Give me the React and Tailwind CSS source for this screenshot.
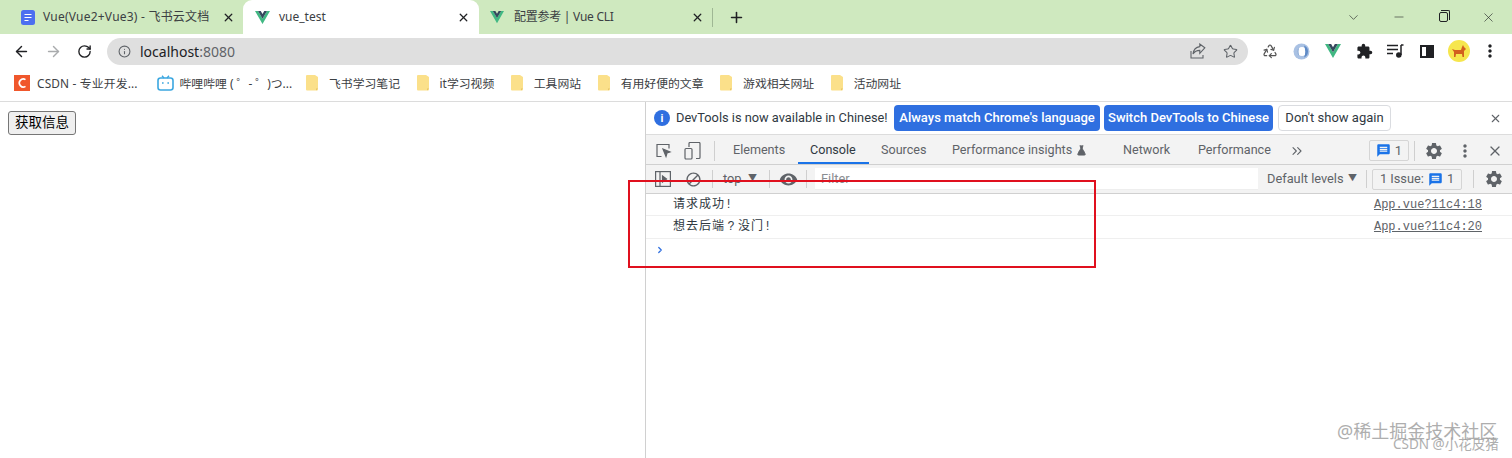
import React from "react";
import { ArrowLeft, ArrowRight, RotateCw, Info, Star, Recycle, X, Plus, ChevronDown, Minus, ChevronsRight, ChevronRight, FlaskConical } from "lucide-react";
import { MdSettings, MdVisibility, MdMessage, MdMoreVert, MdBlock, MdExtension } from "react-icons/md";

const VueLogo = ({ s = 16 }) => (
  <svg width={s} height={s} viewBox="0 0 24 21" className="shrink-0">
    <path d="M0 0h4.8L12 12.4 19.2 0H24L12 21z" fill="#41b883" />
    <path d="M4.8 0h4.4L12 5l2.8-5h4.4L12 12.4z" fill="#35495e" />
  </svg>
);
const Folder = () => (
  <svg width="13" height="16" viewBox="0 0 13 16" className="shrink-0">
    <path d="M1 0h8l3 2v12.500a1 1 0 0 1-1 1H1a1 1 0 0 1-1-1V1a1 1 0 0 1 1-1z" fill="#fbe08a" />
    <path d="M10 15.500l2-2h-2z" fill="#e4c266" />
  </svg>
);
const DocIcon = () => (
  <svg width="14" height="15" viewBox="0 0 14 15" className="shrink-0">
    <rect width="14" height="15" rx="2.500" fill="#4d6ff0" />
    <path d="M3.500 4.500h7M3.500 7.500h7M3.500 10.500h4" stroke="#fff" strokeWidth="1.200" />
  </svg>
);
const Bili = () => (
  <svg width="17" height="16" viewBox="0 0 17 16" className="shrink-0">
    <path d="M5 .8l2 2.200M12 .8l-2 2.200" stroke="#3ba7e0" strokeWidth="1.300" />
    <rect x="1" y="3" width="15" height="12" rx="2.500" fill="none" stroke="#3ba7e0" strokeWidth="1.600" />
    <path d="M5 8h1.600M10.400 8H12" stroke="#3ba7e0" strokeWidth="1.600" />
  </svg>
);
const Csdn = () => (
  <div className="w-4 h-4 bg-[#f0572c] flex items-center justify-center shrink-0">
    <svg width="12" height="12" viewBox="0 0 12 12"><path d="M9.500 2.600A4 4 0 1 0 9.500 9.400" fill="none" stroke="#fff" strokeWidth="1.700" /></svg>
  </div>
);
const Bookmark = ({ icon, children, gap = "gap-[10px]", textCls = "" }) => (
  <div className={`flex items-center ${gap} text-[11.85px] text-[#3c4043] whitespace-nowrap`}>{icon}<span className={textCls}>{children}</span></div>
);
const ShareIcon = () => (
  <svg width="16" height="16" viewBox="0 0 16 16" fill="none" stroke="#5f6368" strokeWidth="1.100">
    <path d="M1 8v7h12v-3" />
    <path d="M14.800 4.800L9.800 1v2.600C6 4 3.600 6.500 3 11c1.600-2.600 3.600-3.600 6.800-3.600v2.900z" />
  </svg>
);
const MusicList = () => (
  <svg width="17" height="14" viewBox="0 0 17 14" fill="none" stroke="#202124" strokeWidth="1.500">
    <path d="M0 1.500h11M0 5.500h11M0 9.500h6" />
    <path d="M14 1v10" />
    <path d="M14 1h2.500" />
    <circle cx="11.800" cy="11" r="2" fill="#202124" />
  </svg>
);
const SidePanel = () => (
  <div className="w-[14px] h-[13px] border-2 border-[#202124] flex justify-end">
    <div className="w-[6px] bg-[#202124]" />
  </div>
);
const JsonIcon = () => (
  <svg width="17" height="17" viewBox="0 0 17 17">
    <circle cx="8.500" cy="8.500" r="8" fill="#a9c1e3" />
    <circle cx="9" cy="8.500" r="4.500" fill="#fff" />
    <path d="M11 2.500a6.500 6.500 0 0 1 0 12c1.800-3.500 1.500-8-0-12z" fill="#5e8ac6" />
    <path d="M6 4.500a6 6 0 0 0 0 8c-.8-2.500-.8-5.500 0-8z" fill="#5e8ac6" />
  </svg>
);
const Corgi = () => (
  <div className="w-[22px] h-[22px] rounded-full bg-[#f6e64d] flex items-center justify-center">
    <svg width="16" height="14" viewBox="0 0 16 14" fill="#d2601e">
      <path d="M1 5l3 1h6l1-3 1-2 1 2 2 2-2 2v6h-1.500l-.5-3H5l-.5 3H3V8z" />
    </svg>
  </div>
);
const Restore = () => (
  <div className="relative w-[9px] h-[10px] border border-[#202124] rounded-[2px]">
    <div className="absolute -top-[3px] left-[1px] w-[9px] h-[10px] border-t border-r border-[#202124] rounded-tr-[2px]" />
  </div>
);
const Dock = () => (
  <svg width="16" height="16" viewBox="0 0 16 16" fill="none" stroke="#5f6368" strokeWidth="1.200">
    <path d="M5.500 13.500H1v-12h12v4" />
    <path d="M7 6l7 3-3 1-1 3.500z" fill="#5f6368" />
  </svg>
);
const Device = () => (
  <svg width="17" height="18" viewBox="0 0 17 18" fill="none" stroke="#5f6368" strokeWidth="1.200">
    <path d="M5 5V1.500a1 1 0 0 1 1-1h9a1 1 0 0 1 1 1v14a1 1 0 0 1-1 1h-3" />
    <rect x="1" y="6.500" width="7" height="10.500" rx="1" />
  </svg>
);
const DrawerIcon = () => (
  <svg width="16" height="16" viewBox="0 0 16 16" fill="none" stroke="#5f6368" strokeWidth="1.200">
    <rect x=".6" y=".6" width="14.800" height="14.800" />
    <path d="M5 1v14" />
    <path d="M7.500 5l4 3-4 3z" fill="#5f6368" />
  </svg>
);
const Issue = () => <MdMessage size={15} color="#1a73e8" className="shrink-0" />;
const Sep = ({ cls = "h-[20px] bg-[#cfcfcf]" }) => <div className={`w-px shrink-0 ${cls}`} />;
const Slot = ({ children, w }) => <div className={`${w} flex items-center justify-center shrink-0`}>{children}</div>;

export default function App() {
  return (
    <div className="relative w-[1512px] h-[458px] overflow-hidden bg-white font-['Noto_Sans','Noto_Sans_CJK_SC',sans-serif]">
      {/* Tab strip */}
      <div className="h-[34px] bg-[#cfe9bf] flex items-center pl-[21px]">
        <div className="h-full flex items-center w-[222px] shrink-0">
          <DocIcon />
          <span className="ml-[8px] text-xs tracking-[0.22px] whitespace-nowrap text-[#3c4043]">Vue(Vue2+Vue3) - 飞书云文档</span>
          <X size={13} strokeWidth={2.4} className="ml-auto mr-[8px] text-[#202124]" />
        </div>
        <div className="h-full flex items-center w-[236px] shrink-0 bg-white rounded-t-[9px] pl-[12px]">
          <VueLogo s={15} />
          <span className="ml-[9px] text-xs text-[#3c4043]">vue_test</span>
          <X size={13} strokeWidth={2.4} className="ml-auto mr-[9px] text-[#202124]" />
        </div>
        <div className="h-full flex items-center w-[234px] shrink-0 pl-[11px]">
          <VueLogo s={14} />
          <span className="ml-[10px] text-xs tracking-[-0.25px] whitespace-nowrap text-[#3c4043]">配置参考 | Vue CLI</span>
          <X size={13} strokeWidth={2.4} className="ml-auto mr-[8px] text-[#202124]" />
          <Sep cls="h-[19px] bg-[#9fb794]" />
        </div>
        <Plus size={17} strokeWidth={2.2} className="ml-[15px] text-[#202124]" />
        <div className="ml-auto flex items-center pr-px text-[#202124]">
          <Slot w="w-[45px]"><ChevronDown size={15} strokeWidth={1} /></Slot>
          <Slot w="w-[45px]"><Minus size={14} strokeWidth={1} /></Slot>
          <Slot w="w-[45px]"><Restore /></Slot>
          <Slot w="w-[45px]"><X size={15} strokeWidth={1} /></Slot>
        </div>
      </div>

      {/* Address bar */}
      <div className="h-[34px] flex items-center pl-[13px] pr-[6px]">
        <ArrowLeft size={17} strokeWidth={2} className="text-[#202124]" />
        <ArrowRight size={17} strokeWidth={2} className="ml-[15px] text-[#a9abad]" />
        <RotateCw size={15} strokeWidth={2.2} className="ml-[15px] text-[#202124]" />
        <div className="ml-[15px] w-[1141px] h-[27px] rounded-full bg-[#dfdfdf] flex items-center pl-[11px] pr-[10px]">
          <Info size={13} strokeWidth={2} className="text-[#5f6368]" />
          <span className="ml-[9px] text-[14px] text-[#202124]">localhost<span className="text-[#5f6368]">:8080</span></span>
          <div className="ml-auto flex items-center gap-[17px]">
            <ShareIcon />
            <Star size={15} strokeWidth={1.7} className="text-[#5f6368]" />
          </div>
        </div>
        <div className="ml-auto flex items-center">
          <Slot w="w-[31.5px]"><Recycle size={16} strokeWidth={1.8} className="text-[#555]" /></Slot>
          <Slot w="w-[31.5px]"><JsonIcon /></Slot>
          <Slot w="w-[31.5px]"><VueLogo s={16} /></Slot>
          <Slot w="w-[31.5px]"><MdExtension size={17} color="#202124" /></Slot>
          <Slot w="w-[31.5px]"><MusicList /></Slot>
          <Slot w="w-[31.5px]"><SidePanel /></Slot>
          <Slot w="w-[31.5px]"><Corgi /></Slot>
          <Slot w="w-[31.5px]"><MdMoreVert size={20} color="#202124" /></Slot>
        </div>
      </div>

      {/* Bookmarks */}
      <div className="h-[34px] flex items-center pl-[14px] pb-[2px] gap-[16.5px] border-b border-[#dcdcdc]">
        <Bookmark icon={<Csdn />} gap="gap-[7px]" textCls="w-[103px] tracking-[0.15px]">CSDN - 专业开发...</Bookmark>
        <Bookmark icon={<Bili />} gap="gap-[6px]" textCls="w-[110px]">哔哩哔哩 ( ゜- ゜)つ...</Bookmark>
        <Bookmark icon={<Folder />}>飞书学习笔记</Bookmark>
        <Bookmark icon={<Folder />}>it学习视频</Bookmark>
        <Bookmark icon={<Folder />}>工具网站</Bookmark>
        <Bookmark icon={<Folder />}>有用好便的文章</Bookmark>
        <Bookmark icon={<Folder />}>游戏相关网址</Bookmark>
        <Bookmark icon={<Folder />}>活动网址</Bookmark>
      </div>

      {/* Page + DevTools */}
      <div className="flex h-[356px]">
        <div className="w-[645px] shrink-0 pl-[8px] pt-[7px]">
          <button className="h-[24px] w-[68px] bg-[#efefef] border border-[#767676] rounded-[3px] text-[13.5px] text-black leading-none">获取信息</button>
        </div>
        <div className="flex-1 border-l border-[#d0d0d0] flex flex-col min-w-0 font-['Roboto','Noto_Sans_CJK_SC',sans-serif]">
          {/* Infobar */}
          <div className="h-[33px] shrink-0 flex items-center pl-[8px] pr-[10px] border-b border-[#dcdcdc] text-[13px]">
            <div className="w-[16px] h-[16px] rounded-full bg-[#2f6fe0] flex items-center justify-center text-white text-[11px] font-bold leading-none">i</div>
            <span className="ml-[6px] w-[212px] text-[12.8px] text-[#303942] whitespace-nowrap">DevTools is now available in Chinese!</span>
            <div className="ml-[6px] h-[26px] w-[206px] rounded-[4px] bg-[#2f6fe0] text-white font-medium flex items-center justify-center whitespace-nowrap">Always match Chrome's language</div>
            <div className="ml-[4px] h-[26px] w-[169px] rounded-[4px] bg-[#2f6fe0] text-white font-medium flex items-center justify-center whitespace-nowrap">Switch DevTools to Chinese</div>
            <div className="ml-[5px] h-[26px] w-[113px] rounded-[4px] border border-[#dadce0] text-[#303942] flex items-center justify-center whitespace-nowrap">Don't show again</div>
            <X size={13} strokeWidth={2} className="ml-auto text-[#5f6368]" />
          </div>
          {/* Tabs */}
          <div className="h-[30px] shrink-0 flex items-center bg-[#f3f3f3] border-b border-[#d0d0d0] pl-[10px] pr-[9px] pt-[2px] text-[12.6px] text-[#5f6368] whitespace-nowrap">
            <Dock />
            <div className="ml-[12px]"><Device /></div>
            <div className="ml-[13px]"><Sep /></div>
            <span className="ml-[18px] w-[52px]">Elements</span>
            <div className="relative ml-[25px] w-[46px] h-full flex items-center text-[#303942]">
              <span>Console</span>
              <div className="absolute bottom-0 -left-[12px] -right-[13px] h-[2px] bg-[#1a73e8]" />
            </div>
            <span className="ml-[25px] w-[45px]">Sources</span>
            <span className="ml-[26px] w-[120px]">Performance insights</span>
            <FlaskConical size={11} fill="#5f6368" className="ml-[4px]" />
            <span className="ml-[36px] w-[48px]">Network</span>
            <span className="ml-[27px] w-[72px]">Performance</span>
            <ChevronsRight size={16} strokeWidth={1.6} className="ml-[19px]" />
            <div className="ml-auto flex items-center text-[13px]">
              <div className="w-[40px] h-[21px] border border-[#d5d5d5] rounded-[2px] flex items-center justify-center gap-[4px] text-[#5f6368]"><Issue />1</div>
              <div className="ml-[5px]"><Sep /></div>
              <MdSettings size={20} color="#5f6368" className="ml-[9px]" />
              <MdMoreVert size={20} color="#5f6368" className="ml-[11px]" />
              <X size={16} strokeWidth={1.8} className="ml-[12px]" />
            </div>
          </div>
          {/* Filter bar */}
          <div className="h-[29px] shrink-0 flex items-center bg-[#f3f3f3] border-b border-[#d0d0d0] pl-[9px] pr-[8px] text-[12.8px] text-[#5f6368] whitespace-nowrap">
            <DrawerIcon />
            <MdBlock size={17} color="#5f6368" className="ml-[14px]" />
            <div className="ml-[10px]"><Sep cls="h-[18px] bg-[#cfcfcf]" /></div>
            <span className="ml-[10px] w-[20px]">top</span>
            <span className="ml-[5px] text-[9px]">▼</span>
            <div className="ml-[12px]"><Sep cls="h-[18px] bg-[#cfcfcf]" /></div>
            <MdVisibility size={19} color="#5f6368" className="ml-[9px]" />
            <div className="ml-[8px]"><Sep cls="h-[18px] bg-[#cfcfcf]" /></div>
            <div className="ml-[8px] w-[443px] h-[22px] bg-white border-b border-[#eeeeee] flex items-center pl-[6px] text-[#8a8d91]">Filter</div>
            <span className="ml-[9px] w-[76px]">Default levels</span>
            <span className="ml-[5px] text-[9px]">▼</span>
            <div className="ml-[9px]"><Sep cls="h-[18px] bg-[#cfcfcf]" /></div>
            <div className="ml-[5px] w-[90px] h-[21px] border border-[#d5d5d5] rounded-[2px] flex items-center justify-center gap-[4px]">1 Issue: <Issue />1</div>
            <div className="ml-[11px]"><Sep cls="h-[18px] bg-[#cfcfcf]" /></div>
            <MdSettings size={20} color="#5f6368" className="ml-auto" />
          </div>
          {/* Console rows */}
          <div className="h-[22px] shrink-0 flex items-center border-b border-[#efefef] pl-[27px] pr-[30px] text-xs text-[#303942] font-['Liberation_Mono','Noto_Sans_CJK_SC',monospace]">
            <span className="tracking-[1px]">请求成功!</span>
            <span className="ml-auto underline text-[#5f6368]">App.vue?11c4:18</span>
          </div>
          <div className="h-[23px] shrink-0 flex items-center border-b border-[#efefef] pl-[27px] pr-[30px] text-xs text-[#303942] font-['Liberation_Mono','Noto_Sans_CJK_SC',monospace]">
            <span className="tracking-[1px] whitespace-nowrap">想去后端<span className="inline-block w-[13px] text-center">?</span>没门!</span>
            <span className="ml-auto underline text-[#5f6368]">App.vue?11c4:20</span>
          </div>
          <div className="h-[21px] shrink-0 flex items-center pl-[9px]">
            <ChevronRight size={10} strokeWidth={3} className="text-[#2f6fe0]" />
          </div>
        </div>
      </div>

      {/* Annotation rectangle */}
      <div className="absolute left-[628px] top-[180px] w-[468px] h-[88px] border-2 border-[#e0101e]" />
      {/* Watermarks */}
      <div className="absolute left-[1337px] top-[422px] text-[18px] leading-none text-[#9a9a9a] opacity-80 whitespace-nowrap">@稀土掘金技术社区</div>
      <div className="absolute left-[1393px] top-[438px] text-[13.5px] leading-none text-[#9a9a9a] opacity-80 whitespace-nowrap">CSDN @小花皮猪</div>
    </div>
  );
}
